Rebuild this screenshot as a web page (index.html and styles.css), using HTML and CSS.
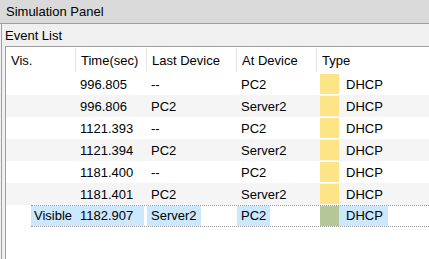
FILE: index.html
```html
<!DOCTYPE html>
<html lang="en">
<head>
  <meta charset="UTF-8">
  <title>Simulation Panel</title>
  <link rel="stylesheet" href="styles.css">
</head>
<body>
  <div class="title">Simulation Panel</div>
  <div class="panel">
    <div class="caption">Event List</div>
    <div class="list">
      <div class="row head">
        <div class="cell">Vis.</div>
        <div class="cell">Time(sec)</div>
        <div class="cell">Last Device</div>
        <div class="cell">At Device</div>
        <div class="cell">Type</div>
      </div>
      <div class="row">
        <div class="cell"></div>
        <div class="cell">996.805</div>
        <div class="cell">--</div>
        <div class="cell">PC2</div>
        <div class="cell type"><span class="swatch"></span><span class="txt">DHCP</span></div>
      </div>
      <div class="row alt">
        <div class="cell"></div>
        <div class="cell">996.806</div>
        <div class="cell">PC2</div>
        <div class="cell">Server2</div>
        <div class="cell type"><span class="swatch"></span><span class="txt">DHCP</span></div>
      </div>
      <div class="row">
        <div class="cell"></div>
        <div class="cell">1121.393</div>
        <div class="cell">--</div>
        <div class="cell">PC2</div>
        <div class="cell type"><span class="swatch"></span><span class="txt">DHCP</span></div>
      </div>
      <div class="row alt">
        <div class="cell"></div>
        <div class="cell">1121.394</div>
        <div class="cell">PC2</div>
        <div class="cell">Server2</div>
        <div class="cell type"><span class="swatch"></span><span class="txt">DHCP</span></div>
      </div>
      <div class="row">
        <div class="cell"></div>
        <div class="cell">1181.400</div>
        <div class="cell">--</div>
        <div class="cell">PC2</div>
        <div class="cell type"><span class="swatch"></span><span class="txt">DHCP</span></div>
      </div>
      <div class="row alt">
        <div class="cell"></div>
        <div class="cell">1181.401</div>
        <div class="cell">PC2</div>
        <div class="cell">Server2</div>
        <div class="cell type"><span class="swatch"></span><span class="txt">DHCP</span></div>
      </div>
      <div class="row sel">
        <div class="cell hl vis">Visible</div>
        <div class="cell hl">1182.907</div>
        <div class="cell"><span class="hl">Server2</span></div>
        <div class="cell"><span class="hl">PC2</span></div>
        <div class="cell type"><span class="swatch green"></span><span class="txt hl">DHCP</span></div>
      </div>
    </div>
  </div>
</body>
</html>
```

FILE: styles.css
```css
html, body { margin:0; width:429px; height:259px; overflow:hidden; }
body { font-family:'Liberation Sans', Arial, sans-serif; font-size:13px; color:#000; background:#f0f0f0; }
.title { height:23px; line-height:24px; padding-left:6px; background:#dadada; border-bottom:1px solid #a0a0a0; }
.panel { margin-left:1px; border-left:1px solid #a0a0a0; height:235px; background:#f0f0f0; }
.caption { height:22px; line-height:23px; padding-left:3px; }
.list { margin-left:3px; border-left:1px solid #a0a0a0; border-top:1px solid #a0a0a0; background:#fff; height:213px; }
.row { display:grid; grid-template-columns:69px 71px 90px 80px 1fr; height:22px; line-height:22px; }
.row.alt { background:#f5f5f5; }
.cell { padding-left:5px; padding-top:1px; box-sizing:border-box; height:22px; white-space:nowrap; }
.head { height:26px; }
.head .cell { height:26px; line-height:26px; }
.head .cell + .cell { border-left:1px solid #e5e5e5; margin:1px 0; height:24px; line-height:24px; }
.type { display:flex; align-items:flex-start; padding-left:4px; padding-top:0; }
.type .txt { padding-left:7px; padding-right:5px; padding-top:1px; }
.swatch { width:19px; height:20px; margin-top:1px; background:#fde587; }
.swatch.green { background:#b5c698; height:20px; margin-top:0; }
.sel { margin-left:25px; grid-template-columns:44px 71px 90px 80px 1fr; border-top:1px dotted #999; border-bottom:1px dotted #999; box-sizing:border-box; }
.sel .cell { height:20px; line-height:20px; padding-top:0; }
.sel .hl { background:#cce8ff; }
.sel .vis { padding-left:3px; }
.sel .cell:nth-child(2) { margin-right:2px; }
.sel .cell:nth-child(3), .sel .cell:nth-child(4) { padding-left:1px; }
.sel .cell:nth-child(3) .hl, .sel .cell:nth-child(4) .hl { padding:0 4px; display:inline-block; }
.sel .type .txt { padding-top:0; }
```
